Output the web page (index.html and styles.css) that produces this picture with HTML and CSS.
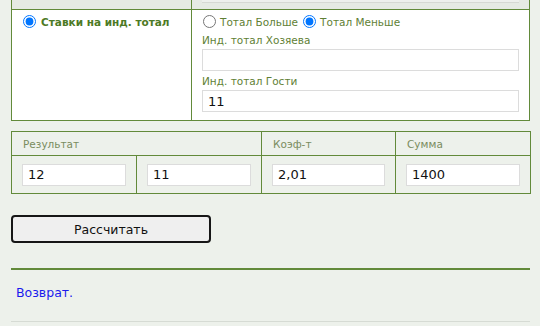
FILE: index.html
```html
<!DOCTYPE html>
<html>
<head>
<meta charset="utf-8">
<link rel="stylesheet" href="styles.css">
</head>
<body>
<div class="page">
  <div class="bets">
    <div class="prev prev-left"></div>
    <div class="prev prev-right"><div class="prev-input"></div></div>
    <div class="cell cell-left">
      <label class="main-opt"><input type="radio" name="kind" checked><span>Ставки на инд. тотал</span></label>
    </div>
    <div class="cell cell-right">
      <div class="opts">
        <label class="opt"><input type="radio" name="tot"><span>Тотал Больше</span></label>
        <label class="opt"><input type="radio" name="tot" checked><span>Тотал Меньше</span></label>
      </div>
      <div class="field-label first">Инд. тотал Хозяева</div>
      <input class="txt" type="text" value="">
      <div class="field-label">Инд. тотал Гости</div>
      <input class="txt" type="text" value="11">
    </div>
  </div>

  <table class="result">
    <colgroup>
      <col class="c1"><col class="c2"><col class="c3"><col class="c4">
    </colgroup>
    <tr class="head">
      <th colspan="2">Результат</th>
      <th>Коэф-т</th>
      <th>Сумма</th>
    </tr>
    <tr class="body">
      <td><input class="txt" type="text" value="12"></td>
      <td><input class="txt" type="text" value="11"></td>
      <td><input class="txt" type="text" value="2,01"></td>
      <td><input class="txt" type="text" value="1400"></td>
    </tr>
  </table>

  <button class="calc" type="button">Рассчитать</button>

  <div class="sep"></div>
  <div class="back"><a href="#">Возврат.</a></div>
  <div class="sep-light"></div>
</div>
</body>
</html>
```

FILE: styles.css
```css
html, body {
  margin: 0;
  padding: 0;
  background: #edf1eb;
}
body {
  font-family: "DejaVu Sans", Verdana, sans-serif;
  font-size: 10px;
  color: #5f7f35;
}
.page {
  margin-left: 11px;
  width: 519px;
}
.bets {
  display: grid;
  grid-template-columns: 180px 1fr;
  grid-template-rows: 10px 110px;
  border-left: 1px solid #628a3a;
  border-right: 1px solid #628a3a;
  border-bottom: 1px solid #628a3a;
}
.prev {
  background: #e6eae4;
  border-bottom: 1px solid #628a3a;
  box-sizing: border-box;
}
.prev-left {
  border-right: 1px solid #628a3a;
}
.prev-right {
  padding: 0 10px 0 10px;
}
.prev-input {
  height: 2px;
  background: #eef0ed;
  border-bottom: 1px solid #d6d9d4;
}
.cell {
  background: #fff;
  box-sizing: border-box;
}
.cell-left {
  border-right: 1px solid #628a3a;
  padding: 5px 0 0 11px;
}
.cell-right {
  padding: 5px 10px 0 10px;
}
.main-opt, .opt {
  display: inline-flex;
  align-items: center;
  cursor: default;
}
.main-opt span {
  font-weight: bold;
  color: #4d7a25;
  font-size: 10.5px;
  margin-left: 5px;
}
input[type=radio] {
  width: 13px;
  height: 13px;
  margin: 0;
}
.opts {
  display: flex;
  height: 13px;
  align-items: center;
}
.opt {
  margin-right: 4px;
  margin-left: 1px;
}
.opt span {
  margin-left: 4px;
  font-size: 10.5px;
}
.field-label {
  margin-top: 4px;
  height: 13px;
  line-height: 13px;
  font-size: 10.5px;
}
.field-label.first {
  margin-top: 6px;
}
.txt {
  display: block;
  box-sizing: border-box;
  width: 100%;
  height: 22px;
  margin: 0;
  border: 1px solid #dcdcdc;
  background: #fff;
  padding: 0 5px;
  font-family: "DejaVu Sans", Verdana, sans-serif;
  font-size: 13px;
  color: #111;
  outline: none;
}
.cell-right .field-label + .txt {
  margin-top: 2px;
}
.result {
  margin-top: 10px;
  width: 519px;
  border-collapse: collapse;
  table-layout: fixed;
}
.c1 { width: 125px; }
.c2 { width: 125px; }
.c3 { width: 134px; }
.c4 { width: 135px; }
.result th, .result td {
  border: 1px solid #628a3a;
}
.result th {
  height: 23px;
  padding: 0 0 0 11px;
  text-align: left;
  font-weight: normal;
  color: #7a8c5e;
  font-size: 10.5px;
}
.result td {
  height: 38px;
  padding: 0 10px;
  box-sizing: border-box;
}
.calc {
  display: block;
  margin-top: 21px;
  width: 200px;
  height: 28px;
  border: 2px solid #161616;
  border-radius: 4px;
  background: #efefef;
  font-family: "DejaVu Sans", Verdana, sans-serif;
  font-size: 12.5px;
  color: #111;
  padding: 0;
}
.sep {
  margin-top: 25px;
  height: 2px;
  background: #628a3a;
}
.back {
  padding: 15px 0 0 5px;
  height: 51px;
  box-sizing: border-box;
}
.back a {
  color: #1a1aee;
  text-decoration: none;
  font-size: 12.5px;
}
.sep-light {
  height: 1px;
  background: #d6dbd4;
}
```
